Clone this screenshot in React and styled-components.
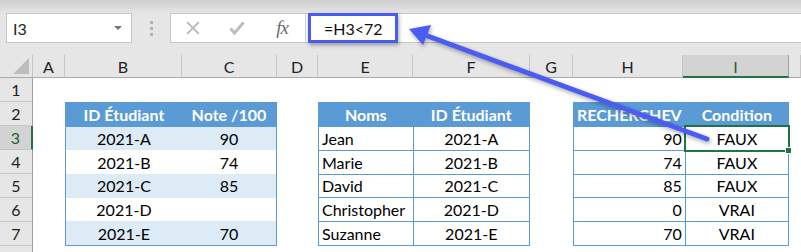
import React from 'react';
import styled, { createGlobalStyle, css } from 'styled-components';

const GlobalStyle = createGlobalStyle`
  body {
    margin: 0;
    font-family: Lato, "Liberation Sans", sans-serif;
    background: #fff;
  }
`;

const GREEN = '#217346';
const BLUE = '#5B9BD5';

const Page = styled.div`
  position: relative;
  width: 801px;
  height: 252px;
  overflow: hidden;
  background: #e6e6e6;
  font-size: 16px;
  color: #000;
`;

const TopBand = styled.div`
  height: 13px;
  background: linear-gradient(#cdcdcd, #e6e6e6);
`;

const FormulaRow = styled.div`
  display: flex;
  align-items: stretch;
  height: 30px;
  padding-left: 6px;
  margin-bottom: 12px;
`;

const NameBox = styled.div`
  width: 126px;
  box-sizing: border-box;
  background: #fff;
  border: 1px solid #c6c6c6;
  display: flex;
  align-items: center;
  justify-content: space-between;
  padding: 0 9px 0 6px;
  color: #222;
`;

const Caret = styled.span`
  width: 0;
  height: 0;
  border-left: 4px solid transparent;
  border-right: 4px solid transparent;
  border-top: 4px solid #777;
`;

const Grip = styled.div`
  width: 38px;
  display: flex;
  flex-direction: column;
  align-items: center;
  justify-content: center;
  gap: 3px;

  span {
    width: 3px;
    height: 3px;
    background: #b2b2b2;
  }
`;

const FormulaBox = styled.div`
  flex: 1;
  display: flex;
  background: #fff;
  border: 1px solid #c6c6c6;
  border-right: none;
`;

const IconButton = styled.div`
  width: ${p => p.$w || 44}px;
  display: flex;
  align-items: center;
  justify-content: center;
  color: #bcbcbc;
`;

const Fx = styled.span`
  font-family: "Liberation Serif", serif;
  font-style: italic;
  font-size: 19px;
  color: #6b6b6b;
  letter-spacing: -1px;
`;

const FormulaInput = styled.div`
  flex: 1;
  display: flex;
  align-items: stretch;
  border-left: 1px solid #d4d4d4;
  background: #fff;
`;

const Highlight = styled.div`
  margin: -1px 0 -1px 2px;
  width: 90px;
  box-sizing: border-box;
  border: 3px solid #4a5cf2;
  box-shadow: 1px 2px 4px rgba(0, 0, 0, 0.35);
  display: flex;
  align-items: center;
  padding-left: 13px;
  color: #111;
  position: relative;
  z-index: 2;
`;

const Sheet = styled.div`
  display: grid;
  grid-template-columns: 33px 32px 117px 95px 41px 95px 117px 43px 110px 106px 1fr;
  grid-template-rows: 23px repeat(8, 24px);
  background: #fff;
`;

const Corner = styled.div`
  grid-column: 1;
  grid-row: 1;
  background: #e6e6e6;
  border-right: 1px solid #c6c6c6;
  border-bottom: 1px solid #ababab;
  display: flex;
  align-items: flex-end;
  justify-content: flex-end;
  padding: 0 3px 3px 0;

  &::before {
    content: '';
    width: 16px;
    height: 16px;
    background: #bdbdbd;
    clip-path: polygon(100% 0, 100% 100%, 0 100%);
  }
`;

const ColHead = styled.div`
  grid-row: 1;
  background: ${p => (p.$active ? '#d3d3d3' : '#e6e6e6')};
  border-right: 1px solid ${p => (p.$active ? '#9f9f9f' : '#c6c6c6')};
  border-bottom: ${p => (p.$active ? `2px solid ${GREEN}` : '1px solid #ababab')};
  display: flex;
  align-items: center;
  justify-content: center;
  color: ${p => (p.$active ? '#1d5d39' : '#222')};
  padding-top: 1px;
`;

const RowHead = styled.div`
  grid-column: 1;
  grid-row: ${p => p.$row};
  background: ${p => (p.$active ? '#d3d3d3' : '#e6e6e6')};
  border-bottom: 1px solid #c6c6c6;
  border-right: ${p => (p.$active ? `2px solid ${GREEN}` : '1px solid #9e9e9e')};
  display: flex;
  align-items: center;
  justify-content: center;
  color: ${p => (p.$active ? '#1d5d39' : '#222')};
`;

const Table = styled.div`
  grid-column: ${p => p.$col} / span 2;
  grid-row: 3 / span 6;
  display: grid;
  grid-template-columns: ${p => p.$cols};
  grid-template-rows: repeat(6, 1fr);
  gap: ${p => (p.$lines ? '1px' : '0')};
  background: ${BLUE};
  border: 1px solid ${BLUE};
`;

const Cell = styled.div`
  position: relative;
  display: flex;
  align-items: center;
  justify-content: ${p =>
    p.$align === 'left' ? 'flex-start' : p.$align === 'right' ? 'flex-end' : 'center'};
  padding: 0 3px;
  white-space: nowrap;
  background: ${p => (p.$head ? BLUE : p.$band ? '#ddebf7' : '#fff')};
  color: ${p => (p.$head ? '#fff' : '#000')};
  font-weight: ${p => (p.$head ? 700 : 400)};

  ${p =>
    p.$selected &&
    css`
      box-shadow: 0 0 0 2px ${GREEN};
      z-index: 1;

      &::after {
        content: '';
        position: absolute;
        right: -4px;
        bottom: -4px;
        width: 5px;
        height: 5px;
        background: ${GREEN};
        border: 1px solid #fff;
      }
    `}
`;

const Overlay = styled.svg`
  position: absolute;
  left: 0;
  top: 0;
  pointer-events: none;
  z-index: 5;
  filter: drop-shadow(1px 2px 2px rgba(0, 0, 0, 0.35));
`;

const columns = ['A', 'B', 'C', 'D', 'E', 'F', 'G', 'H', 'I', ''];

const grades = [
  ['2021-A', '90'],
  ['2021-B', '74'],
  ['2021-C', '85'],
  ['2021-D', ''],
  ['2021-E', '70'],
];

const names = [
  ['Jean', '2021-A'],
  ['Marie', '2021-B'],
  ['David', '2021-C'],
  ['Christopher', '2021-D'],
  ['Suzanne', '2021-E'],
];

const lookups = [
  ['90', 'FAUX'],
  ['74', 'FAUX'],
  ['85', 'FAUX'],
  ['0', 'VRAI'],
  ['70', 'VRAI'],
];

const CrossIcon = () => (
  <svg width="16" height="16" viewBox="0 0 16 16">
    <path d="M2 2 L14 14 M14 2 L2 14" stroke="currentColor" strokeWidth="1.8" fill="none" />
  </svg>
);

const CheckIcon = () => (
  <svg width="16" height="16" viewBox="0 0 16 16">
    <path d="M1.5 8.5 L5.5 13 L14.5 2.5" stroke="currentColor" strokeWidth="2.8" fill="none" />
  </svg>
);

export default function App() {
  return (
    <>
      <GlobalStyle />
      <Page>
        <TopBand />
        <FormulaRow>
          <NameBox>
            I3
            <Caret />
          </NameBox>
          <Grip>
            <span />
            <span />
            <span />
          </Grip>
          <FormulaBox>
            <IconButton>
              <CrossIcon />
            </IconButton>
            <IconButton>
              <CheckIcon />
            </IconButton>
            <IconButton $w={46}>
              <Fx>fx</Fx>
            </IconButton>
            <FormulaInput>
              <Highlight>=H3&lt;72</Highlight>
            </FormulaInput>
          </FormulaBox>
        </FormulaRow>

        <Sheet>
          <Corner />
          {columns.map((c, i) => (
            <ColHead key={i} $active={c === 'I'}>
              {c}
            </ColHead>
          ))}
          {[1, 2, 3, 4, 5, 6, 7, 8].map(r => (
            <RowHead key={r} $row={r + 1} $active={r === 3}>
              {r < 8 ? r : ''}
            </RowHead>
          ))}

          <Table $col={3} $cols="117fr 95fr">
            <Cell $head>ID Étudiant</Cell>
            <Cell $head>Note /100</Cell>
            {grades.map(([id, note], i) => (
              <React.Fragment key={id}>
                <Cell $band={i % 2 === 0}>{id}</Cell>
                <Cell $band={i % 2 === 0}>{note}</Cell>
              </React.Fragment>
            ))}
          </Table>

          <Table $col={6} $cols="94fr 116fr" $lines>
            <Cell $head>Noms</Cell>
            <Cell $head>ID Étudiant</Cell>
            {names.map(([name, id]) => (
              <React.Fragment key={id}>
                <Cell $align="left">{name}</Cell>
                <Cell>{id}</Cell>
              </React.Fragment>
            ))}
          </Table>

          <Table $col={9} $cols="109fr 105fr" $lines>
            <Cell $head>RECHERCHEV</Cell>
            <Cell $head>Condition</Cell>
            {lookups.map(([v, cond], i) => (
              <React.Fragment key={i}>
                <Cell $align="right">{v}</Cell>
                <Cell $selected={i === 0}>{cond}</Cell>
              </React.Fragment>
            ))}
          </Table>
        </Sheet>

        <Overlay width="801" height="252" viewBox="0 0 801 252">
          <line
            x1="707"
            y1="139"
            x2="425"
            y2="35"
            stroke="#4a5cf2"
            strokeWidth="5"
            strokeLinecap="round"
          />
          <polygon points="409,29 431,25 423,45" fill="#4a5cf2" />
        </Overlay>
      </Page>
    </>
  );
}
